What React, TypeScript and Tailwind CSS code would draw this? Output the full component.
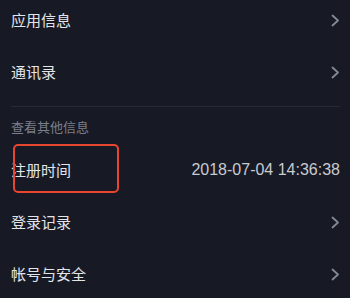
import React from "react";

const Chevron = () => (
  <svg width="9" height="13" viewBox="0 0 9 13" fill="none">
    <polyline points="1.5,1.5 7,6.5 1.5,11.5" stroke="#858895" strokeWidth="1.8" strokeLinecap="round" strokeLinejoin="round" />
  </svg>
);

const Row = ({ label, right, box }: { label: string; right?: React.ReactNode; box?: boolean }) => (
  <div className="relative h-[52px] pl-[11px] pr-[10px] flex items-center justify-between">
    <span className="text-[15px] text-[#e4e5e9] leading-none">{label}</span>
    {right ?? <Chevron />}
    {box && (
      <div className="absolute left-[13px] top-0 w-[106px] h-[49px] border-[2.5px] border-[#e8452f] rounded-[5px]" />
    )}
  </div>
);

export default function App() {
  return (
    <div
      className="w-[350px] h-[298px] overflow-hidden bg-[#171a25]"
      style={{ fontFamily: '"Liberation Sans", "Noto Sans CJK SC", sans-serif' }}
    >
      <div className="-mt-[6px]">
        <Row label="应用信息" />
        <Row label="通讯录" />
        <div className="mt-[8px] ml-[11px] mr-[10px] h-px bg-[#272a36]" />
        <div className="h-[37px] pl-[11px] flex items-center pt-[3px]">
          <span className="text-[13px] text-[#7b7e89] leading-none">查看其他信息</span>
        </div>
        <Row
          label="注册时间"
          box
          right={<span className="text-[16px] text-[#c9cad0] leading-none">2018-07-04 14:36:38</span>}
        />
        <Row label="登录记录" />
        <Row label="帐号与安全" />
      </div>
    </div>
  );
}
